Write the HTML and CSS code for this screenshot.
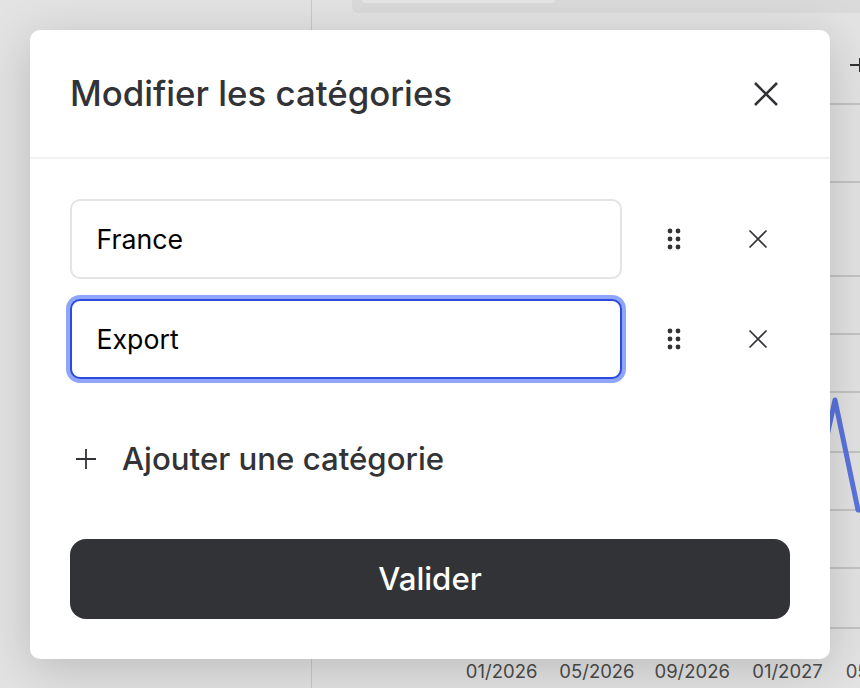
FILE: index.html
```html
<!DOCTYPE html>
<html lang="fr">
<head>
  <meta charset="UTF-8" />
  <meta name="viewport" content="width=device-width, initial-scale=1.0"/>
  <title>Modifier les catégories</title>
  <link rel="stylesheet" href="styles.css">
</head>
<body>
  <!-- Page behind the dimmed overlay -->
  <div class="backdrop">
    <div class="divider"></div>
    <div class="toolbar"><div class="toolbar-tab"></div></div>
    <svg class="chart" viewBox="0 0 860 688" aria-hidden="true">
      <g class="grid">
        <path d="M830 104H860M830 182H860M830 276H860M830 334H860M830 392H860M830 452H860M830 510H860M830 568H860M830 628H860"/>
      </g>
      <path class="series" d="M825 445L835 400L858 510H870"/>
      <path class="plus" d="M850 65H860M860 58V72"/>
    </svg>
    <div class="dates">
      <span>01/2026</span>
      <span>05/2026</span>
      <span>09/2026</span>
      <span>01/2027</span>
      <span>05/2027</span>
    </div>
  </div>

  <div class="modal" role="dialog" aria-label="Modifier les catégories">
    <div class="modal-header">
      <h1>Modifier les catégories</h1>
      <button class="icon-btn close" aria-label="Fermer">
        <svg width="26" height="26" viewBox="0 0 26 26"><path d="M2 2L24 24M24 2L2 24" stroke-width="2.6"/></svg>
      </button>
    </div>

    <div class="modal-body">
      <div class="rows">
        <div class="row">
          <input class="field" type="text" value="France">
          <button class="icon-btn" aria-label="Déplacer">
            <svg width="14" height="22" viewBox="0 0 14 22"><g class="dots"><circle cx="3" cy="3" r="2.400"/><circle cx="11" cy="3" r="2.400"/><circle cx="3" cy="11" r="2.400"/><circle cx="11" cy="11" r="2.400"/><circle cx="3" cy="19" r="2.400"/><circle cx="11" cy="19" r="2.400"/></g></svg>
          </button>
          <button class="icon-btn" aria-label="Supprimer">
            <svg width="20" height="20" viewBox="0 0 20 20"><path d="M1.5 1.5L18.5 18.5M18.5 1.5L1.5 18.5" stroke-width="1.7"/></svg>
          </button>
        </div>
        <div class="row">
          <input class="field is-focused" type="text" value="Export">
          <button class="icon-btn" aria-label="Déplacer">
            <svg width="14" height="22" viewBox="0 0 14 22"><g class="dots"><circle cx="3" cy="3" r="2.400"/><circle cx="11" cy="3" r="2.400"/><circle cx="3" cy="11" r="2.400"/><circle cx="11" cy="11" r="2.400"/><circle cx="3" cy="19" r="2.400"/><circle cx="11" cy="19" r="2.400"/></g></svg>
          </button>
          <button class="icon-btn" aria-label="Supprimer">
            <svg width="20" height="20" viewBox="0 0 20 20"><path d="M1.5 1.5L18.5 18.5M18.5 1.5L1.5 18.5" stroke-width="1.7"/></svg>
          </button>
        </div>
      </div>

      <button class="add">
        <svg width="32" height="32" viewBox="0 0 32 32"><path d="M6 16H26M16 6V26" stroke-width="1.8"/></svg>
        <span>Ajouter une catégorie</span>
      </button>

      <button class="submit">Valider</button>
    </div>
  </div>
</body>
</html>
```

FILE: styles.css
```css
:root {
  --ink:#323336;
  --line:#f2f2f2;
  --field-line:#e4e4e4;
  --focus:#2c4bdd;
  --ring:#8fa5f9;
  font-family: Inter,"Liberation Sans",sans-serif;
}
*{box-sizing:border-box;}
body {
  margin:0;
  width:860px;
  height:688px;
  overflow:hidden;
  position:relative;
  background:#e3e3e3;
  padding:30px;
}
.backdrop {
  position:absolute;
  inset:0;
}
.divider {
  position:absolute;
  left:311px;
  top:0;
  width:1px;
  height:100%;
  background:#c8c8c8;
}
.toolbar {
  position:absolute;
  left:352px;
  top:0;
  right:0;
  height:13px;
  padding-left:10px;
  background:#dadada;
  border-bottom-left-radius:6px;
}
.toolbar-tab {
  width:193px;
  height:3px;
  background:#e6e6e6;
  border-bottom-left-radius:4px;
  border-bottom-right-radius:4px;
}
.chart {
  position:absolute;
  inset:0;
  width:860px;
  height:688px;
  fill:none;
}
.grid path {stroke:#c4c4c4; stroke-width:2;}
.series {stroke:#5a74dd; stroke-width:5; stroke-linejoin:round;}
.plus {stroke:#333; stroke-width:2;}
.dates {
  position:absolute;
  left:454px;
  top:660px;
  display:flex;
  font-size:18.500px;
  line-height:22px;
  color:#4c4c4c;
  white-space:nowrap;
}
.dates span {width:95.300px; text-align:center; flex:none;}
.modal {
  position:relative;
  width:800px;
  height:629px;
  background:#fff;
  border-radius:10px;
  box-shadow:0 10px 50px rgba(0,0,0,.18);
}
.modal-header {
  display:flex;
  align-items:center;
  justify-content:space-between;
  height:129px;
  padding:0 40px;
  border-bottom:2px solid var(--line);
}
h1 {
  margin:-2px 0 0;
  font-size:34.800px;
  font-weight:450;
  color:var(--ink);
}
.icon-btn {
  display:flex;
  align-items:center;
  justify-content:center;
  width:64px;
  height:48px;
  padding:0;
  border:none;
  background:none;
  flex:none;
}
.icon-btn svg {fill:none; stroke:var(--ink);}
.icon-btn.close {width:48px;}
.icon-btn .dots {fill:var(--ink); stroke:none;}
.modal-body {padding:40px;}
.rows {
  display:flex;
  flex-direction:column;
  gap:20px;
}
.row {
  display:flex;
  align-items:center;
  gap:20px;
}
.field {
  flex:1;
  min-width:0;
  height:80px;
  padding:0 24.500px;
  border:2px solid var(--field-line);
  border-radius:10px;
  outline:none;
  font:400 26.700px Inter,"Liberation Sans",sans-serif;
  color:#000;
  background:#fff;
}
.field.is-focused {
  border-color:var(--focus);
  box-shadow:0 0 0 4px var(--ring);
}
.add {
  display:flex;
  align-items:center;
  gap:20px;
  width:100%;
  height:80px;
  margin:40px 0;
  padding:0;
  border:none;
  background:none;
  font:450 31.200px Inter,"Liberation Sans",sans-serif;
  color:var(--ink);
}
.add span {margin-top:-1px;}
.add svg {fill:none; stroke:var(--ink);}
.submit {
  display:block;
  width:100%;
  height:80px;
  padding:0;
  border:none;
  border-radius:16px;
  background:var(--ink);
  color:#fff;
  font:450 31.200px Inter,"Liberation Sans",sans-serif;
}
```
